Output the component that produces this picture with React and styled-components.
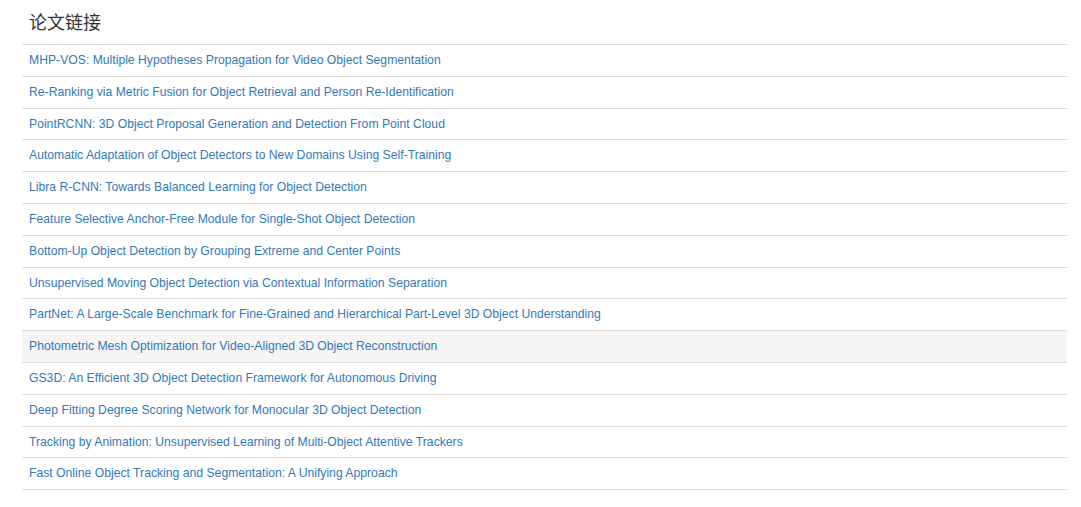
import React from "react";
import styled, { createGlobalStyle } from "styled-components";

const GlobalStyle = createGlobalStyle`
  body {
    margin: 0;
    background: #fff;
    font-family: "Liberation Sans", Arial, "Noto Sans CJK SC", sans-serif;
  }
`;

const Panel = styled.section`
  width: 1045px;
  padding-left: 22px;
`;

const Title = styled.h3`
  margin: 0;
  padding: 11px 7px 9px;
  font-size: 18px;
  line-height: 24px;
  font-weight: 400;
  color: #333;
  font-family: "Liberation Sans", "Noto Sans CJK SC", sans-serif;
`;

const Table = styled.div`
  display: flex;
  flex-direction: column;
  border-bottom: 1px solid #ddd;
`;

const Row = styled.div`
  border-top: 1px solid #ddd;
  padding: 7px;
  line-height: 16.8px;
  font-size: 12.2px;
  background: ${(props) => (props.$active ? "#f5f5f5" : "transparent")};
`;

const Link = styled.a`
  color: #337ab7;
  text-decoration: none;
`;

const papers = [
  "MHP-VOS: Multiple Hypotheses Propagation for Video Object Segmentation",
  "Re-Ranking via Metric Fusion for Object Retrieval and Person Re-Identification",
  "PointRCNN: 3D Object Proposal Generation and Detection From Point Cloud",
  "Automatic Adaptation of Object Detectors to New Domains Using Self-Training",
  "Libra R-CNN: Towards Balanced Learning for Object Detection",
  "Feature Selective Anchor-Free Module for Single-Shot Object Detection",
  "Bottom-Up Object Detection by Grouping Extreme and Center Points",
  "Unsupervised Moving Object Detection via Contextual Information Separation",
  "PartNet: A Large-Scale Benchmark for Fine-Grained and Hierarchical Part-Level 3D Object Understanding",
  "Photometric Mesh Optimization for Video-Aligned 3D Object Reconstruction",
  "GS3D: An Efficient 3D Object Detection Framework for Autonomous Driving",
  "Deep Fitting Degree Scoring Network for Monocular 3D Object Detection",
  "Tracking by Animation: Unsupervised Learning of Multi-Object Attentive Trackers",
  "Fast Online Object Tracking and Segmentation: A Unifying Approach",
];

const App = () => {
  return (
    <>
      <GlobalStyle />
      <Panel>
        <Title>论文链接</Title>
        <Table>
          {papers.map((p, i) => (
            <Row key={p} $active={i === 9}>
              <Link href="#">{p}</Link>
            </Row>
          ))}
        </Table>
      </Panel>
    </>
  );
};

export default App;
